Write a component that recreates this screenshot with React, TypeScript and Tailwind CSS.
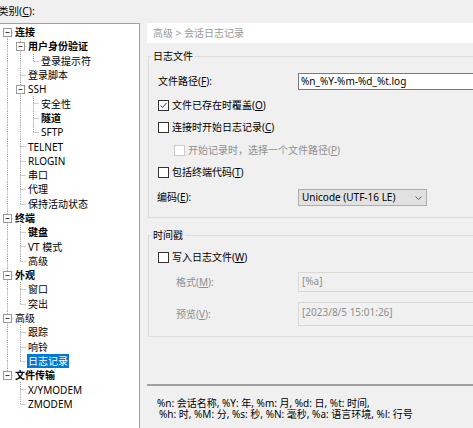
import React from "react";

type Node = { t: string; l: number; b?: boolean; exp?: boolean; sel?: boolean };

const TREE: Node[] = [
  { t: "连接", l: 0, b: true, exp: true },
  { t: "用户身份验证", l: 1, b: true, exp: true },
  { t: "登录提示符", l: 2 },
  { t: "登录脚本", l: 1 },
  { t: "SSH", l: 1, exp: true },
  { t: "安全性", l: 2 },
  { t: "隧道", l: 2, b: true },
  { t: "SFTP", l: 2 },
  { t: "TELNET", l: 1 },
  { t: "RLOGIN", l: 1 },
  { t: "串口", l: 1 },
  { t: "代理", l: 1 },
  { t: "保持活动状态", l: 1 },
  { t: "终端", l: 0, b: true, exp: true },
  { t: "键盘", l: 1, b: true },
  { t: "VT 模式", l: 1 },
  { t: "高级", l: 1 },
  { t: "外观", l: 0, b: true, exp: true },
  { t: "窗口", l: 1 },
  { t: "突出", l: 1 },
  { t: "高级", l: 0, exp: true },
  { t: "跟踪", l: 1 },
  { t: "响铃", l: 1 },
  { t: "日志记录", l: 1, sel: true },
  { t: "文件传输", l: 0, b: true, exp: true },
  { t: "X/YMODEM", l: 1 },
  { t: "ZMODEM", l: 1 },
];

// is there another node at level k further down before the branch closes
function hasLater(i: number, k: number) {
  for (let j = i + 1; j < TREE.length; j++) {
    if (TREE[j].l < k) return false;
    if (TREE[j].l === k) return true;
  }
  return false;
}

const LINE = "#a0a0a0";

function Cell({ up, down, right, box }: { up?: boolean; down?: boolean; right?: boolean; box?: boolean }) {
  return (
    <svg width="13" height="14.3" viewBox="0 0 13 14.3" className="shrink-0">
      {up && <line x1="6.5" y1="0" x2="6.5" y2="7.5" stroke={LINE} strokeDasharray="1 1" />}
      {down && <line x1="6.5" y1="7.5" x2="6.5" y2="14.3" stroke={LINE} strokeDasharray="1 1" />}
      {right && <line x1={box ? 10.5 : 6.5} y1="7.5" x2="12.5" y2="7.5" stroke={LINE} strokeDasharray="1 1" />}
      {box && (
        <>
          <rect x="2.5" y="3.5" width="8" height="8" fill="white" stroke="#9a9a9a" />
          <line x1="4.5" y1="7.5" x2="8.5" y2="7.5" stroke="#404040" />
        </>
      )}
    </svg>
  );
}

function TreeRow({ node, i }: { node: Node; i: number }) {
  const cols = [];
  for (let k = 0; k < node.l; k++) {
    const on = hasLater(i, k);
    cols.push(<Cell key={k} up={on} down={on} />);
  }
  cols.push(<Cell key="own" up={i > 0} down={hasLater(i, node.l)} right box={node.exp} />);
  return (
    <div className="flex h-[14.3px] items-center">
      {cols}
      <span
        className={
          node.sel
            ? "bg-[#0078d7] px-[1px] leading-[14px] text-white"
            : node.b
            ? "px-[1px] leading-[14px] font-bold"
            : "px-[1px] leading-[14px]"
        }
      >
        {node.t}
      </span>
    </div>
  );
}

function Check({ checked, disabled }: { checked?: boolean; disabled?: boolean }) {
  return (
    <span
      className={
        disabled
          ? "flex h-[11px] w-[11px] shrink-0 items-center justify-center border border-[#cccccc] bg-white"
          : "flex h-[11px] w-[11px] shrink-0 items-center justify-center border border-[#333333] bg-white"
      }
    >
      {checked && (
        <svg width="9" height="9" viewBox="0 0 9 9">
          <polyline points="1.5,4.5 3.5,6.5 7.5,2" fill="none" stroke="#333333" strokeWidth="1" />
        </svg>
      )}
    </span>
  );
}

export default function App() {
  return (
    <div className="h-[428px] w-[473px] overflow-hidden bg-[#f0f0f0] font-['Noto_Sans','Noto_Sans_CJK_SC',sans-serif] text-[10px] text-black">
      <div className="-ml-[2px] flex h-[23px] items-center text-[10.5px]">
        类别(<span className="underline">C</span>):
      </div>

      <div className="flex">
        <div className="h-[405px] w-[140px] shrink-0 border-r border-t border-[#a0a0a0] bg-white pl-[1px] pt-[1px]">
          {TREE.map((n, i) => (
            <TreeRow key={i} node={n} i={i} />
          ))}
        </div>

        <div className="flex-1 pl-[7px]">
          <div className="h-[20px] bg-white pl-[6px] leading-[20px] text-[#9a9a9a]">高级 &gt; 会话日志记录</div>

          <fieldset className="ml-[1px] mt-[6px] w-[340px] border border-[#dcdcdc] pb-[11px]">
            <legend className="ml-[2px] px-[2px] leading-[14px]">日志文件</legend>
            <div className="mt-[10px] flex h-[17px] items-center">
              <div className="w-[149px] shrink-0 pl-[9px]">
                文件路径(<span className="underline">F</span>):
              </div>
              <div className="flex h-[17px] flex-1 items-center border border-[#7a7a7a] bg-white pl-[2px]">
                %n_%Y-%m-%d_%t.log
              </div>
            </div>
            <div className="mt-[7px] flex h-[16px] items-center gap-[3px] pl-[9px]">
              <Check checked />
              <span>
                文件已存在时覆盖(<span className="underline">O</span>)
              </span>
            </div>
            <div className="mt-[6px] flex h-[16px] items-center gap-[3px] pl-[9px]">
              <Check />
              <span>
                连接时开始日志记录(<span className="underline">C</span>)
              </span>
            </div>
            <div className="mt-[7px] flex h-[16px] items-center gap-[3px] pl-[25px] text-[#8f8f8f]">
              <Check disabled />
              <span>
                开始记录时，选择一个文件路径(<span className="underline">P</span>)
              </span>
            </div>
            <div className="mt-[6px] flex h-[16px] items-center gap-[3px] pl-[9px]">
              <Check />
              <span>
                包括终端代码(<span className="underline">T</span>)
              </span>
            </div>
            <div className="mt-[9px] flex h-[17px] items-center">
              <div className="w-[149px] shrink-0 pl-[8px]">
                编码(<span className="underline">E</span>):
              </div>
              <div className="flex h-[17px] w-[129px] items-center justify-between border border-[#adadad] bg-[#e1e1e1] pl-[3px] pr-[4px]">
                <span>Unicode (UTF-16 LE)</span>
                <svg width="7" height="4" viewBox="0 0 7 4">
                  <polyline points="0.5,0.5 3.5,3.5 6.5,0.5" fill="none" stroke="#606060" strokeWidth="1" />
                </svg>
              </div>
            </div>
          </fieldset>

          <fieldset className="ml-[1px] mt-[10px] w-[340px] border border-[#dcdcdc] pb-[10px]">
            <legend className="ml-[2px] px-[2px] leading-[14px]">时间戳</legend>
            <div className="mt-[7px] flex h-[16px] items-center gap-[3px] pl-[9px]">
              <Check />
              <span>
                写入日志文件(<span className="underline">W</span>)
              </span>
            </div>
            <div className="mt-[7px] flex h-[20px] items-center text-[#8f8f8f]">
              <div className="w-[149px] shrink-0 pl-[27px]">
                格式(<span className="underline">M</span>):
              </div>
              <div className="h-[20px] flex-1 border border-[#d9d9d9] bg-[#f0f0f0] pl-[3px] pt-[1px] leading-[14px]">
                [%a]
              </div>
            </div>
            <div className="mt-[10px] flex h-[24px] items-center text-[#8f8f8f]">
              <div className="w-[149px] shrink-0 pl-[27px]">
                预览(<span className="underline">V</span>):
              </div>
              <div className="h-[24px] flex-1 border border-[#d9d9d9] bg-[#f0f0f0] pl-[3px] pt-[2px] leading-[14px]">
                [2023/8/5 15:01:26]
              </div>
            </div>
          </fieldset>

          <div className="mt-[47px] h-[2px] bg-[#a0a0a0]" />

          <div className="mt-[12px] leading-[11px]">
            <div className="pl-[10px]">%n: 会话名称, %Y: 年, %m: 月, %d: 日, %t: 时间,</div>
            <div className="pl-[12px]">%h: 时, %M: 分, %s: 秒, %N: 毫秒, %a: 语言环境, %l: 行号</div>
          </div>
        </div>
      </div>
    </div>
  );
}
